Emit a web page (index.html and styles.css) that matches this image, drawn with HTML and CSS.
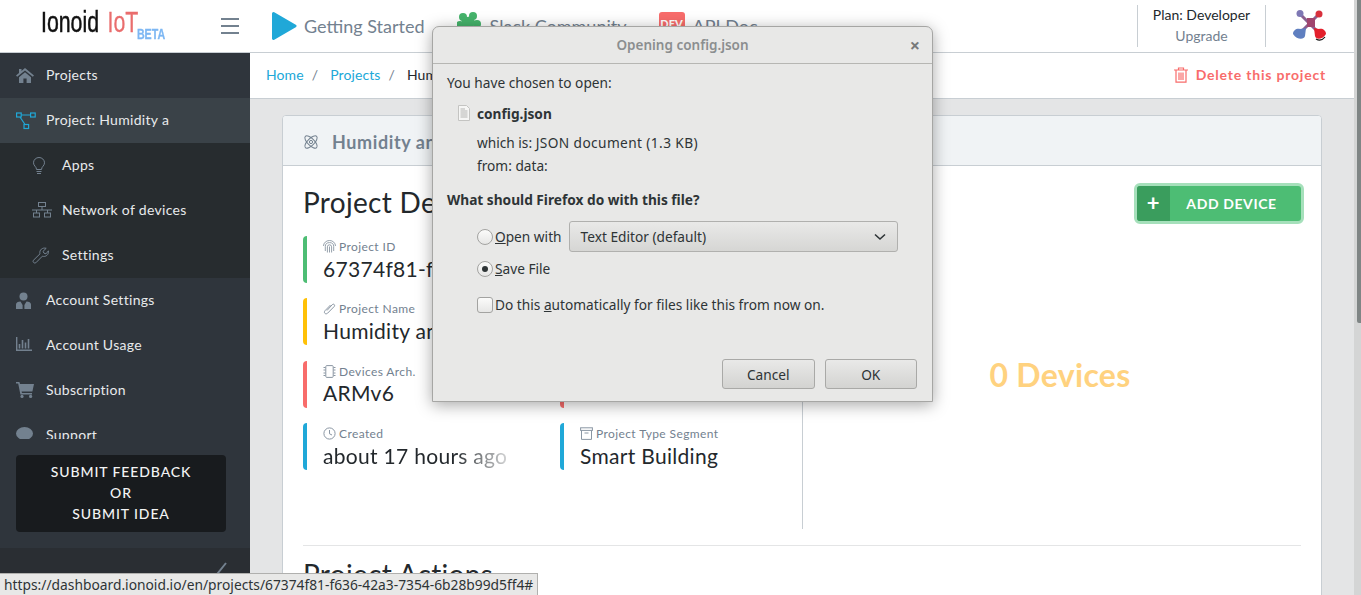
FILE: index.html
```html
<!DOCTYPE html>
<html>
<head>
<meta charset="utf-8">
<title>Ionoid IoT</title>
<link rel="stylesheet" href="styles.css">
</head>
<body>
<div class="screen">
  <div class="page">
    <header class="topbar">
      <a class="logo"><span class="logo-mark"><span class="logo-name">Ionoid</span><span class="logo-iot">IoT</span><span class="logo-beta">BETA</span></span></a>
      <button class="burger"><i></i><i></i><i></i></button>
      <nav class="toplinks">
        <a class="toplink">
          <svg width="26" height="30" viewBox="0 0 26 30"><path d="M2.5 2.5 L24 15 L2.5 27.5 Z" fill="#20a8d8" stroke="#20a8d8" stroke-width="3" stroke-linejoin="round"/></svg>
          Getting Started
        </a>
        <a class="toplink">
          <svg width="26" height="28" viewBox="2 0 26 28"><g fill="#45b36b"><circle cx="8" cy="5" r="4"/><circle cx="18" cy="4" r="4"/><circle cx="22" cy="12" r="4"/><circle cx="5" cy="13" r="4"/><path d="M6 6 L18 4 L21 13 L9 17 Z"/><circle cx="14" cy="20" r="4"/></g></svg>
          Slack Community
        </a>
        <a class="toplink">
          <span class="dev-badge">DEV</span>
          API Doc
        </a>
      </nav>
      <div class="plan">
        <span>Plan: Developer</span>
        <a>Upgrade</a>
      </div>
      <div class="avatar">
        <svg width="36" height="34" viewBox="0 0 36 34">
          <path d="M8 5 L28 25 M27 5 L7 25" stroke="#8a5f8f" stroke-width="3"/>
          <rect x="15" y="9" width="8" height="9" fill="#a0456e"/>
          <circle cx="8" cy="4.5" r="3.5" fill="#7e78b4"/>
          <circle cx="27" cy="5" r="3.5" fill="#d8303c"/>
          <path d="M1 25 C1 21 5 19 8 20 L14 19 L13 27 C12 31 5 31 1 25 Z" fill="#5f7fc0"/>
          <path d="M34 25 C34 21 30 19 27 20 L22 19 L23 27 C24 31 30 31 34 25 Z" fill="#e3202c"/>
          <path d="M24 30 Q29 33 33 28" fill="none" stroke="#111" stroke-width="1.2"/>
        </svg>
      </div>
    </header>
    <div class="layout">
      <aside class="sidebar">
        <ul class="side-nav">
          <li class="side-item">
            <svg class="side-ico" width="18" height="16" viewBox="0 0 18 16"><path d="M9 1 L18 8.5 L16.8 9.8 L9 3.4 L1.2 9.8 L0 8.5 L3 6 V2 H5.5 V3.9 Z M3 10.2 L9 5.2 L15 10.2 V16 H10.6 V11.5 H7.4 V16 H3 Z" fill="#73818f"/></svg>
            Projects
          </li>
          <li class="side-item active">
            <svg class="side-ico" width="20" height="18" viewBox="0 0 20 18"><g fill="none" stroke="#20a8d8" stroke-width="1.2"><rect x=".6" y="1" width="4.6" height="4"/><rect x="14.6" y="1" width="4.6" height="4"/><rect x="8" y="12.5" width="4.6" height="4"/><path d="M5.2 3 H14.6 M4 5 L9 12.5"/></g></svg>
            Project: Humidity a
          </li>
          <li class="side-item sub">
            <svg class="sub-ico" width="14" height="18" viewBox="0 0 14 18"><g fill="none" stroke="#73818f" stroke-width="1"><path d="M4.5 12.5 C4.5 9.5 1.5 9 1.5 5.8 A5.5 5.3 0 0 1 12.5 5.8 C12.5 9 9.5 9.5 9.5 12.5 Z"/><path d="M4.5 14.5 H9.5 M5 16.5 H9"/></g></svg>
            Apps
          </li>
          <li class="side-item sub">
            <svg class="sub-ico" width="20" height="16" viewBox="0 0 20 16"><g fill="none" stroke="#73818f" stroke-width="1"><rect x="6.5" y=".5" width="7" height="4"/><rect x="1.5" y="11" width="6" height="4"/><rect x="12.5" y="11" width="6" height="4"/><path d="M0 8 H20 M10 4.5 V8 M4.5 8 V11 M15.5 8 V11"/></g></svg>
            Network of devices
          </li>
          <li class="side-item sub">
            <svg class="sub-ico" width="17" height="17" viewBox="0 0 17 17"><path d="M1.2 13.5 L8 6.8 C7 3 10.5 .2 14.2 1.3 L11 4.4 L12 6.2 L14 6.8 L16.4 3.8 C17 8 13.5 10.2 10.4 9.2 L3.8 15.8 C2.5 16.8 .4 15 1.2 13.5 Z" fill="none" stroke="#73818f"/></svg>
            Settings
          </li>
          <li class="side-item">
            <svg class="side-ico" width="15" height="18" viewBox="0 0 15 18"><circle cx="7.5" cy="4.5" r="4" fill="#73818f"/><path d="M0 17 V12.5 C0 10.5 2 10 4.5 9.6 L6.6 13 L6.6 17 Z M15 17 V12.5 C15 10.5 13 10 10.5 9.6 L8.4 13 L8.4 17 Z" fill="#73818f"/></svg>
            Account Settings
          </li>
          <li class="side-item">
            <svg class="side-ico" width="16" height="14" viewBox="0 0 16 14"><path d="M.6 0 V13.4 H16 M3.5 11.5 V7 M6.5 11.5 V3 M9.5 11.5 V5.5 M12.5 11.5 V2" fill="none" stroke="#73818f" stroke-width="1.6"/></svg>
            Account Usage
          </li>
          <li class="side-item">
            <svg class="side-ico" width="18" height="16" viewBox="0 0 18 16"><path d="M0 0 H3.4 L4 2 H18 L16.4 9.4 H5.6 L6 11 H16 V12.4 H4.4 L2.2 1.6 H0 Z" fill="#73818f"/><circle cx="6" cy="14.4" r="1.6" fill="#73818f"/><circle cx="14.6" cy="14.4" r="1.6" fill="#73818f"/></svg>
            Subscription
          </li>
          <li class="side-item">
            <svg class="side-ico" width="17" height="15" viewBox="0 0 17 15"><ellipse cx="8.5" cy="6.5" rx="8.5" ry="6.5" fill="#73818f"/></svg>
            Support
          </li>
        </ul>
        <div class="side-feedback">
          <a class="feedback-btn">Submit feedback<br>or<br>Submit idea</a>
        </div>
        <div class="side-minimizer">
          <svg width="14" height="30" viewBox="0 0 14 30"><path d="M11 3 L3 13 L11 23" fill="none" stroke="#73818f" stroke-width="2"/></svg>
        </div>
      </aside>
      <main class="main">
        <div class="crumbs">
          <a>Home</a><span class="sep">/</span>
          <a>Projects</a><span class="sep">/</span>
          <span class="crumb-now">Humidity and</span>
          <a class="delete-link">
            <svg width="14" height="16" viewBox="0 0 14 16"><g fill="none" stroke="#f86c6b" stroke-width="1.2"><path d="M0 3 H14 M4.5 3 V1 H9.5 V3 M2 3 V15.2 H12 V3 M5 5.5 V13 M7 5.5 V13 M9 5.5 V13"/></g></svg>
            Delete this project
          </a>
        </div>
        <section class="card">
          <div class="card-head">
            <svg width="18" height="18" viewBox="0 0 18 18"><g fill="none" stroke="#73818f" stroke-width="1"><ellipse cx="9" cy="9" rx="8" ry="3.4" transform="rotate(45 9 9)"/><ellipse cx="9" cy="9" rx="8" ry="3.4" transform="rotate(-45 9 9)"/><circle cx="9" cy="9" r="1.6"/></g></svg>
            <span>Humidity and</span>
          </div>
          <div class="card-body">
            <div class="details">
              <h2 class="title">Project Details</h2>
              <div class="facts">
                <div class="fact green">
                  <div class="fact-label">
                    <svg width="13" height="13" viewBox="0 0 13 13"><g fill="none" stroke="#8a96a3" stroke-width=".9"><path d="M.5 6 A6 5.5 0 0 1 12.5 6"/><path d="M2.3 11 V6.6 A4.2 4 0 0 1 10.7 6.6 V11"/><path d="M4.4 12.5 V6.8 A2.1 2 0 0 1 8.6 6.8 V12.5"/><path d="M6.5 6.5 V12.5"/></g></svg>
                    Project ID
                  </div>
                  <div class="fact-value">67374f81-f636</div>
                </div>
                <div class="fact plain"></div>
                <div class="fact yellow">
                  <div class="fact-label">
                    <svg width="13" height="13" viewBox="0 0 13 13"><path d="M4 8.5 L9.3 2.6 C10.6 1.3 12.4 3 11.2 4.5 L4.6 11.2 C2.6 13 .2 10.6 2.1 8.6 L7.5 3" fill="none" stroke="#8a96a3"/></svg>
                    Project Name
                  </div>
                  <div class="fact-value">Humidity and</div>
                </div>
                <div class="fact plain"></div>
                <div class="fact red">
                  <div class="fact-label">
                    <svg width="13" height="13" viewBox="0 0 13 13"><g fill="none" stroke="#8a96a3"><rect x="2.8" y=".6" width="7.4" height="11.8" rx="1"/><path d="M.5 2.5 H2.5 M.5 5 H2.5 M.5 8 H2.5 M.5 10.5 H2.5 M10.5 2.5 H12.5 M10.5 5 H12.5 M10.5 8 H12.5 M10.5 10.5 H12.5"/></g></svg>
                    Devices Arch.
                  </div>
                  <div class="fact-value">ARMv6</div>
                </div>
                <div class="fact red"></div>
                <div class="fact blue">
                  <div class="fact-label">
                    <svg width="13" height="13" viewBox="0 0 13 13"><g fill="none" stroke="#8a96a3"><circle cx="6.5" cy="6.5" r="5.6"/><path d="M6.5 3 V6.8 L9 8"/></g></svg>
                    Created
                  </div>
                  <div class="fact-value fade">about 17 hours ago</div>
                </div>
                <div class="fact blue">
                  <div class="fact-label">
                    <svg width="13" height="13" viewBox="0 0 13 13"><g fill="none" stroke="#8a96a3"><rect x=".6" y=".8" width="11.8" height="2.6"/><path d="M1.5 3.4 V12.4 H11.5 V3.4 M4.5 6 H8.5"/></g></svg>
                    Project Type Segment
                  </div>
                  <div class="fact-value">Smart Building</div>
                </div>
              </div>
            </div>
            <div class="devices">
              <div class="devices-top">
                <a class="add-device"><span class="add-plus">+</span><span class="add-text">ADD DEVICE</span></a>
              </div>
              <div class="devices-count">0 Devices</div>
            </div>
          </div>
          <div class="actions">
            <h2 class="title">Project Actions</h2>
          </div>
        </section>
      </main>
    </div>
  </div>
  <div class="scrollbar"><div class="scroll-thumb"></div></div>
</div>

<div class="dialog">
  <div class="dialog-title">Opening config.json<span class="dialog-close">×</span></div>
  <div class="dialog-body">
    <p class="line">You have chosen to open:</p>
    <div class="file-row">
      <svg width="14" height="16" viewBox="0 0 14 16"><path d="M1.5 .5 H9.5 L12.5 3.5 V15.5 H1.5 Z" fill="#f6f6f5" stroke="#c4c4c2"/><path d="M3.5 4 H8 M3.5 6 H10.5 M3.5 8 H10.5 M3.5 10 H10.5 M3.5 12 H10.5" stroke="#b5b5b3"/></svg>
      <b>config.json</b>
    </div>
    <div class="file-meta">
      <p>which is: <span class="meta-type">JSON document (1.3 KB)</span></p>
      <p>from: data:</p>
    </div>
    <p class="line strong">What should Firefox do with this file?</p>
    <div class="choices">
      <div class="choice open-with">
        <span class="radio"></span><span><u>O</u>pen with</span>
        <div class="combo">Text Editor (default)
          <svg width="12" height="8" viewBox="0 0 12 8"><path d="M1 1.5 L6 6 L11 1.5" fill="none" stroke="#2e3436" stroke-width="1.6"/></svg>
        </div>
      </div>
      <div class="choice save-file">
        <span class="radio on"></span><span><u>S</u>ave File</span>
      </div>
      <div class="choice auto">
        <span class="check"></span><span>Do this <u>a</u>utomatically for files like this from now on.</span>
      </div>
    </div>
    <div class="dialog-buttons">
      <button class="gtk-btn">Cancel</button>
      <button class="gtk-btn">OK</button>
    </div>
  </div>
</div>

<div class="status-tip">https://dashboard.ionoid.io/en/projects/67374f81-f636-42a3-7354-6b28b99d5ff4#</div>
</body>
</html>
```

FILE: styles.css
```css
* { box-sizing: border-box; }
html, body { margin: 0; height: 595px; overflow: hidden; }
body { font-family: "Lato", "Open Sans", sans-serif; font-size: 14px; letter-spacing: .3px; color: #23282c; background: #e4e5e6; }
p, h2, ul { margin: 0; padding: 0; }
ul { list-style: none; }
svg { flex: none; display: block; }

.screen { display: flex; height: 595px; }
.page { flex: 1; min-width: 0; display: flex; flex-direction: column; }
.scrollbar { width: 7px; background: #d4d5d5; padding-left: 3px; }
.scroll-thumb { height: 323px; background: #7f8585; border-radius: 0 0 0 2px; }

/* top bar */
.topbar { height: 53px; flex: none; background: #fff; border-bottom: 1px solid #c8ced3; display: flex; align-items: center; }
.logo { width: 205px; padding-left: 41px; height: 40px; margin-bottom: 8px; flex: none; letter-spacing: 0; }
.logo-mark { display: inline-flex; align-items: baseline; transform: scaleX(.71); transform-origin: 0 0; font-family: "Liberation Sans", sans-serif; white-space: nowrap; }
.logo-name { font-size: 30px; line-height: 40px; color: #111; -webkit-text-stroke: .5px #111; }
.logo-iot { font-size: 30px; line-height: 40px; color: #e96d6d; margin-left: 12px; -webkit-text-stroke: .3px #e96d6d; }
.logo-beta { font-size: 15px; font-weight: bold; color: #7db7f3; margin-left: -2px; position: relative; top: 7px; -webkit-text-stroke: .3px #7db7f3; }
.burger { width: 18px; height: 16px; margin: 0 0 0 16px; padding: 0; border: 0; background: none; display: flex; flex-direction: column; justify-content: space-between; }
.burger i { display: block; height: 2px; background: #73818f; }
.toplinks { display: flex; margin-left: 32px; gap: 32px; flex: 1; }
.toplink { display: flex; align-items: center; gap: 7px; font-size: 18px; letter-spacing: 0; color: #73818f; white-space: nowrap; }
.dev-badge { width: 26px; height: 28px; margin-right: 1px; border-radius: 3px; background: #f86c6b; color: #fff; font-size: 11px; font-weight: 900; text-align: center; line-height: 24px; }
.plan { width: 129px; height: 42px; border-left: 1px solid #c8ced3; border-right: 1px solid #c8ced3; display: flex; flex-direction: column; align-items: center; justify-content: space-between; font-size: 14px; letter-spacing: 0; padding: 1px 0 3px; }
.plan a { color: #73818f; }
.avatar { width: 88px; padding-left: 26px; }

/* sidebar */
.layout { flex: 1; min-height: 0; display: flex; }
.sidebar { width: 250px; flex: none; background: #2f353c; color: #e8eaec; display: flex; flex-direction: column; }
.side-nav { height: 386px; overflow: hidden; flex: none; }
.side-item { height: 45px; display: flex; align-items: center; position: relative; padding: 0 0 2px 46px; }
.side-item.active { background: #3a4248; }
.side-item.sub { background: #272c2f; padding-left: 62px; }
.side-ico { position: absolute; left: 16px; top: 14px; }
.sub-ico { position: absolute; left: 32px; top: 14px; }
.side-feedback { padding: 16px 24px 16px 16px; flex: none; }
.feedback-btn { display: block; height: 77px; background: #181b1e; border-radius: 4px; padding-top: 6px; color: #f2f3f4; font-size: 14px; line-height: 21px; letter-spacing: .9px; text-align: center; text-transform: uppercase; font-weight: 500; }
.side-minimizer { flex: 1; background: #2a2e33; display: flex; justify-content: flex-end; padding: 12px 21px 0 0; }

/* main */
.main { flex: 1; min-width: 0; overflow: hidden; }
.crumbs { height: 46px; background: #fff; border-bottom: 1px solid #c8ced3; display: flex; align-items: center; padding: 0 28px 2px 16px; color: #73818f; letter-spacing: .1px; white-space: nowrap; }
.crumbs a { color: #20a8d8; }
.crumbs .sep { margin: 0 12px 0 8px; }
.crumb-now { color: #23282c; }
.crumbs .delete-link { margin-left: auto; display: flex; align-items: center; gap: 8px; color: #f86c6b; font-weight: 700; letter-spacing: .8px; }

.card { margin: 16px 32px 0; background: #fff; border: 1px solid #c8ced3; border-radius: 4px; }
.card-head { height: 50px; background: #f0f3f5; border-bottom: 1px solid #c8ced3; border-radius: 3px 3px 0 0; display: flex; align-items: center; gap: 12px; padding: 3px 0 0 19px; font-size: 18px; font-weight: 700; letter-spacing: .6px; color: #73818f; }
.card-body { display: flex; margin: 0 20px; height: 363px; padding-top: 19px; }
.details { width: 500px; border-right: 1px solid #c8ced3; flex: none; }
.title { font-size: 28px; font-weight: 400; line-height: 34px; color: #23282c; }
.facts { display: grid; grid-template-columns: 257px 1fr; grid-auto-rows: 47px; row-gap: 15.4px; margin-top: 17px; }
.fact { border-left: 4px solid #ccc; border-radius: 4px; padding-left: 16px; }
.fact.green { border-color: #4dbd74; }
.fact.yellow { border-color: #ffc107; }
.fact.red { border-color: #f86c6b; }
.fact.blue { border-color: #20a8d8; }
.fact.plain { border-color: #20a8d8; }
.fact-label { display: flex; align-items: center; gap: 3px; font-size: 12px; letter-spacing: .4px; line-height: 15px; margin-top: 3px; color: #73818f; }
.fact-value { font-size: 21px; line-height: 28px; margin-top: .5px; white-space: nowrap; }
.fade { width: 184px; -webkit-mask-image: linear-gradient(to right, #000 130px, rgba(0,0,0,.2) 184px); mask-image: linear-gradient(to right, #000 130px, rgba(0,0,0,.2) 184px); }

.devices { flex: 1; display: flex; flex-direction: column; }
.devices-top { display: flex; justify-content: flex-end; margin-top: -2px; }
.add-device { display: flex; height: 41px; width: 170px; margin-right: -3px; border: 3px solid #a6e0bb; border-radius: 6px; background: #4dbd74; color: #fff; overflow: hidden; font-size: 14px; font-weight: 700; letter-spacing: .6px; }
.add-plus { width: 33px; background: #3a9d5d; font-size: 22px; font-weight: 700; text-align: center; line-height: 33px; }
.add-text { flex: 1; text-align: center; line-height: 35px; padding-right: 8px; }
.devices-count { text-align: center; color: #ffd27f; font-size: 32px; font-weight: 700; letter-spacing: .3px; margin-top: 133px; padding-left: 16px; line-height: 36px; }

.actions { margin: 16px 20px 0; border-top: 1px solid #e4e5e6; padding: 11px 0 100px; }

/* download dialog */
.dialog { position: absolute; left: 432px; top: 26px; width: 501px; height: 376px; background: #e8e8e7; border: 1px solid #a6a6a4; border-radius: 7px 7px 0 0; box-shadow: 0 3px 16px rgba(0,0,0,.35); font-family: "Noto Sans", "Open Sans", sans-serif; font-size: 13.7px; letter-spacing: 0; color: #2e3436; }
.dialog-title { height: 37px; border-bottom: 1px solid #b6b6b3; text-align: center; font-size: 13.5px; line-height: 36px; color: #8b8e8f; font-weight: 600; position: relative; }
.dialog-close { position: absolute; right: 12px; top: 0; font-size: 18px; font-weight: 700; color: #77797a; }
.dialog-body { padding: 9px 14px 0; }
.line { line-height: 20px; }
.strong { font-weight: 700; margin-top: 13px; }
.file-row { display: flex; align-items: center; gap: 6px; margin: 11px 0 0 10px; line-height: 20px; }
.file-row svg { margin-top: -2px; }
.file-meta { padding-left: 30px; margin-top: 7px; line-height: 23px; }
.meta-type { letter-spacing: .4px; }
.choices { padding-left: 30px; margin-top: 11px; }
.choice { display: flex; align-items: center; gap: 2px; }
.open-with { height: 31px; }
.save-file { height: 19px; margin-top: 7px; }
.auto { height: 19px; margin-top: 17px; }
.radio { width: 16px; height: 16px; border: 1px solid #a3a3a1; border-radius: 50%; background: linear-gradient(#fbfbfa, #e6e6e5); display: flex; align-items: center; justify-content: center; }
.radio.on::after { content: ""; width: 6px; height: 6px; border-radius: 50%; background: #2e3436; }
.check { width: 16px; height: 16px; border: 1px solid #a3a3a1; border-radius: 3px; background: linear-gradient(#fbfbfa, #e6e6e5); }
.combo { margin-left: 5px; width: 329px; height: 31px; border: 1px solid #b0b0ae; border-radius: 3px; background: linear-gradient(#e9e9e8, #d6d6d4); display: flex; align-items: center; justify-content: space-between; padding: 0 11px; }
.dialog-buttons { display: flex; justify-content: flex-end; gap: 10px; margin: 45px 1px 0 0; }
.gtk-btn { width: 92.5px; height: 30px; border: 1px solid #a9a9a7; border-radius: 3px; background: linear-gradient(#e9e9e8, #d3d3d1); font: inherit; color: inherit; padding: 0; }

.status-tip { position: absolute; left: 0; bottom: 0; height: 22px; width: 538px; background: #e8e8e7; border-top: 1px solid #b0b0ae; border-right: 1px solid #b0b0ae; padding-left: 4px; font-family: "Noto Sans", "Open Sans", sans-serif; font-size: 13.8px; letter-spacing: 0; line-height: 21px; color: #2e3436; white-space: nowrap; overflow: hidden; }
```
